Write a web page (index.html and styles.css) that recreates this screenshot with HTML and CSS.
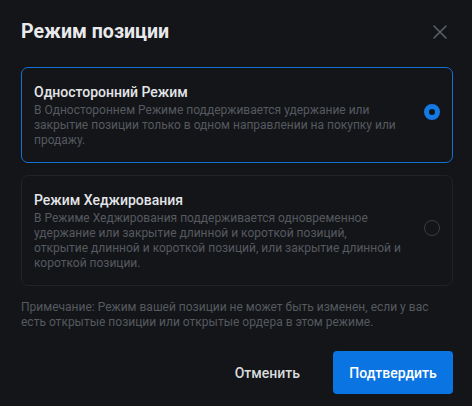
FILE: index.html
```html
<!DOCTYPE html>
<html lang="ru">
<head>
<meta charset="utf-8">
<link rel="stylesheet" href="styles.css">
</head>
<body>
<div class="dialog">
  <div class="header">
    <h1 class="title">Режим позиции</h1>
    <button class="close" aria-label="Закрыть">
      <svg width="14" height="14" viewBox="0 0 14 14"><path d="M1 1L13 13M13 1L1 13" stroke="#5b5f67" stroke-width="1.6" stroke-linecap="round"/></svg>
    </button>
  </div>
  <div class="options">
    <div class="option selected">
      <div class="option-text">
        <div class="option-title">Односторонний Режим</div>
        <div class="option-desc">В Одностороннем Режиме поддерживается удержание или закрытие позиции только в одном направлении на покупку или продажу.</div>
      </div>
      <span class="radio on"></span>
    </div>
    <div class="option">
      <div class="option-text">
        <div class="option-title">Режим Хеджирования</div>
        <div class="option-desc">В Режиме Хеджирования поддерживается одновременное удержание или закрытие длинной и короткой позиций, открытие длинной и короткой позиций, или закрытие длинной и короткой позиции.</div>
      </div>
      <span class="radio"></span>
    </div>
  </div>
  <p class="note">Примечание: Режим вашей позиции не может быть изменен, если у вас есть открытые позиции или открытые ордера в этом режиме.</p>
  <div class="actions">
    <button class="btn cancel">Отменить</button>
    <button class="btn confirm">Подтвердить</button>
  </div>
</div>
</body>
</html>
```
FILE: styles.css
```css
html, body {
  margin: 0;
  padding: 0;
  background: #141518;
}
body {
  font-family: Roboto, "Liberation Sans", sans-serif;
  color: #e6e8eb;
}
.dialog {
  padding: 18px 19px 12px 21px;
  display: flex;
  flex-direction: column;
}
.header {
  display: flex;
  align-items: center;
  justify-content: space-between;
  height: 28px;
}
.title {
  margin: 0;
  font-size: 19.6px;
  font-weight: 700;
  line-height: 28px;
  color: #e8e9ec;
}
.close {
  background: none;
  border: 0;
  padding: 0;
  margin-right: 6px;
  width: 14px;
  height: 14px;
  display: flex;
}
.options {
  margin-top: 21px;
  display: flex;
  flex-direction: column;
  gap: 12px;
}
.option {
  border: 1px solid #202227;
  border-radius: 7px;
  padding: 14px 12px 14px 12px;
  display: flex;
  align-items: center;
  gap: 21px;
}
.option.selected {
  border-color: #1570d6;
}
.option-text {
  flex: 1;
}
.option-title {
  font-size: 14px;
  font-weight: 500;
  line-height: 20px;
  color: #e3e5e8;
}
.option-desc {
  margin-top: 1px;
  font-size: 12px;
  line-height: 15px;
  color: #555960;
}
.radio {
  width: 16px;
  height: 16px;
  box-sizing: border-box;
  border-radius: 50%;
  border: 1px solid #3a3d43;
  margin-bottom: 6px;
  flex: none;
}
.radio.on {
  border: 5px solid #1279e6;
  background: #141518;
}
.note {
  margin: 14px 0 0 0;
  font-size: 12px;
  line-height: 15px;
  color: #555960;
}
.actions {
  margin-top: 21px;
  display: flex;
  justify-content: flex-end;
  gap: 17px;
}
.btn {
  font-family: Roboto, "Liberation Sans", sans-serif;
  font-size: 14px;
  font-weight: 500;
  height: 43px;
  border: 0;
  border-radius: 4px;
  cursor: pointer;
}
.cancel {
  background: none;
  color: #d9dbde;
  padding: 0 16px;
}
.confirm {
  background: #0a74e3;
  color: #ffffff;
  width: 120px;
}
```
